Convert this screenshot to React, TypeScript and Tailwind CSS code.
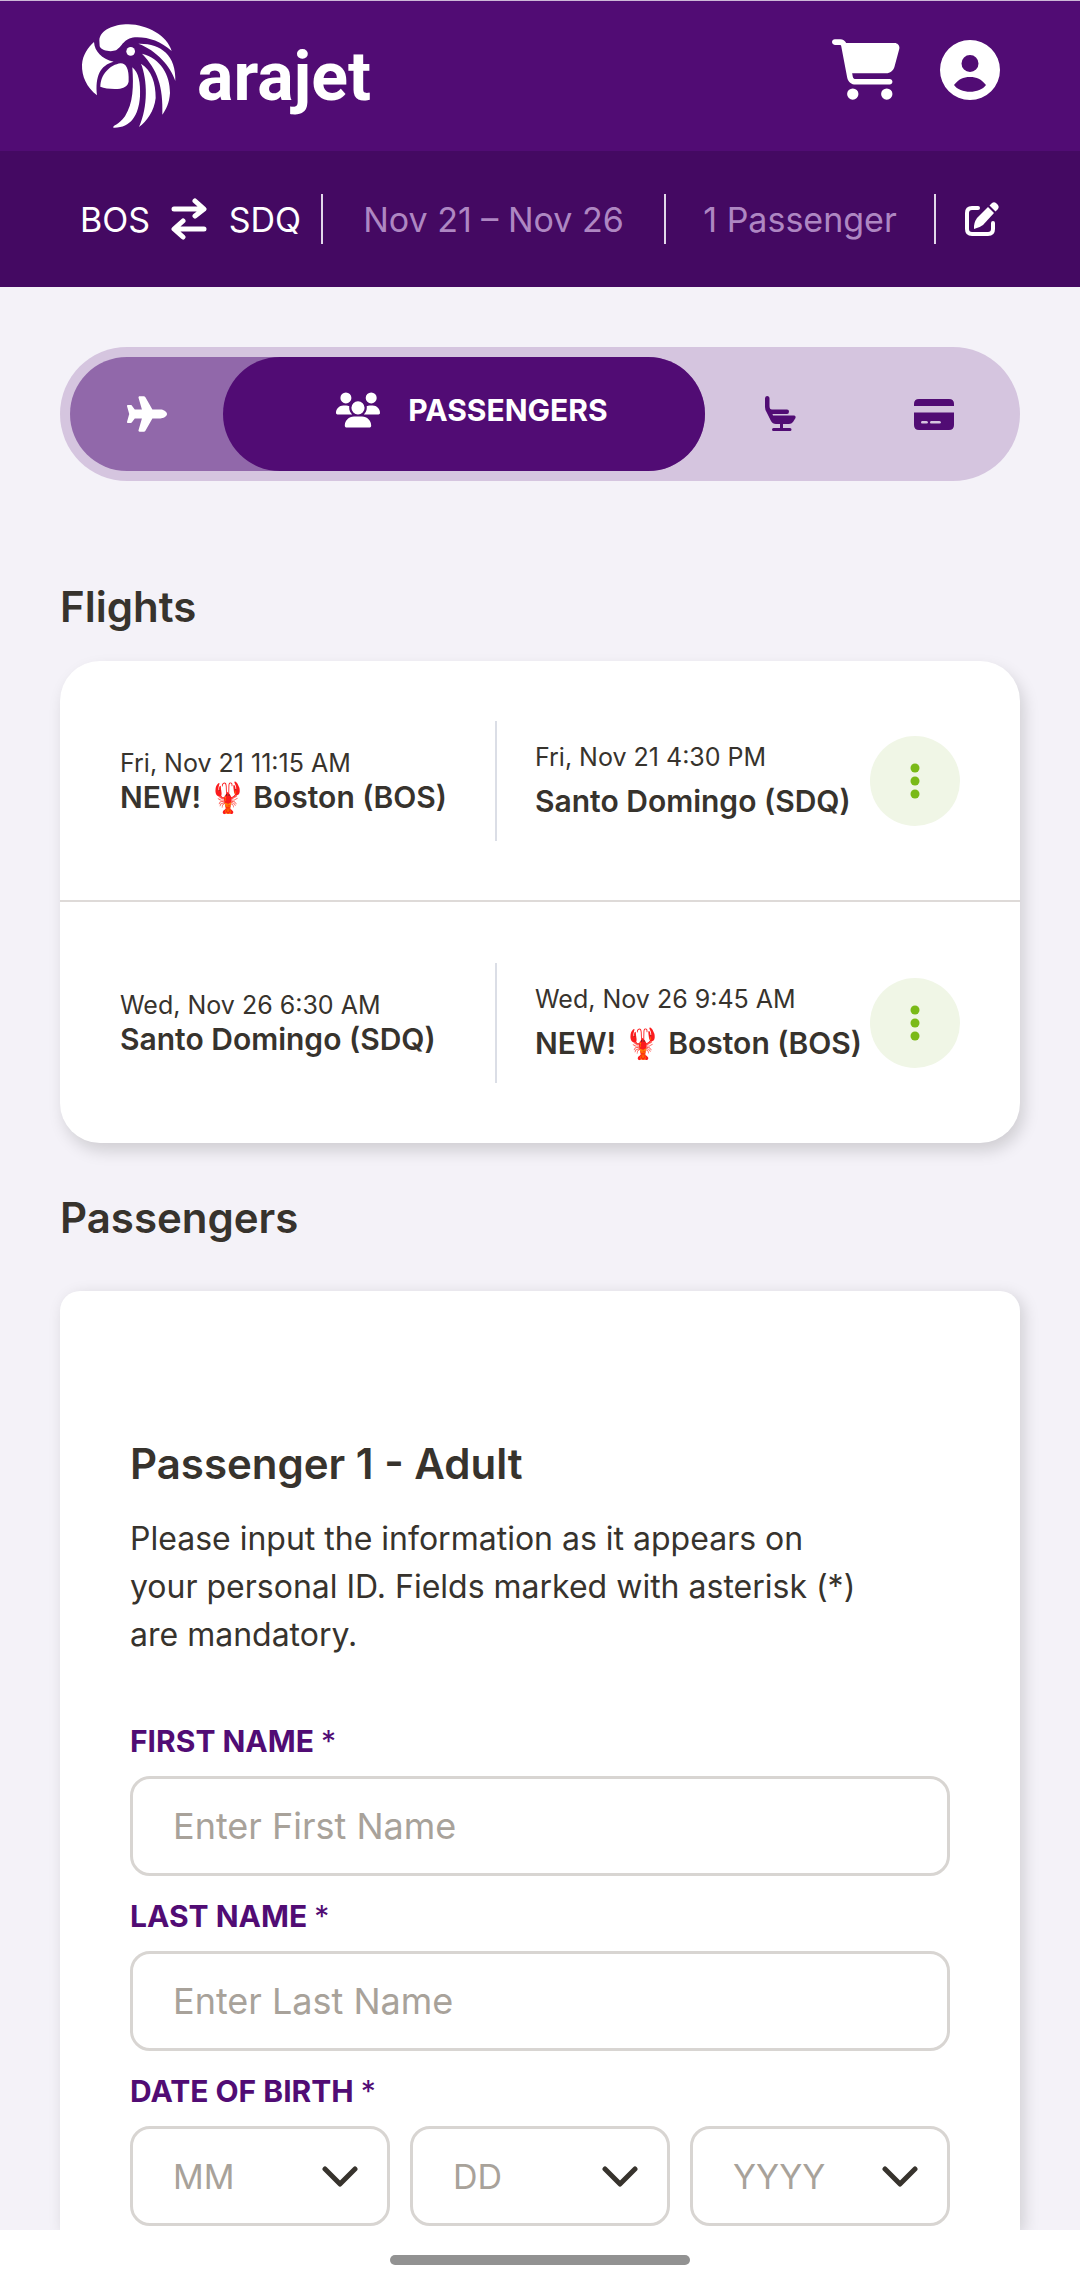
import { FaCartShopping, FaPlane, FaUsers } from "react-icons/fa6"

const flights = [
  {
    departure: { date: "Fri, Nov 21 11:15 AM", city: "NEW! 🦞 Boston (BOS)" },
    arrival: { date: "Fri, Nov 21 4:30 PM", city: "Santo Domingo (SDQ)" },
  },
  {
    departure: { date: "Wed, Nov 26 6:30 AM", city: "Santo Domingo (SDQ)" },
    arrival: { date: "Wed, Nov 26 9:45 AM", city: "NEW! 🦞 Boston (BOS)" },
  },
]

const nameFields = [
  { id: "first-name", label: "FIRST NAME", placeholder: "Enter First Name" },
  { id: "last-name", label: "LAST NAME", placeholder: "Enter Last Name" },
]

const dateParts = [
  { id: "birth-month", placeholder: "MM", name: "Month" },
  { id: "birth-day", placeholder: "DD", name: "Day" },
  { id: "birth-year", placeholder: "YYYY", name: "Year" },
]

function ParrotLogo() {
  return (
    <svg viewBox="60 70 291 321" className="h-[107px] w-[97px]" fill="currentColor" aria-hidden="true">
      <path d="M118 122C120 92 160 74 205 74C262 75 322 108 335 154C302 124 262 111 225 113C190 116 188 140 168 152C155 157 125 155 119 140Z" />
      <path d="M102 127C104 155 125 178 161 186C120 197 105 230 111 287C80 262 65 230 66 195C68 165 85 142 102 127Z" />
      <path d="M182 191C198 192 207 205 206 245C204 258 195 265 180 267C160 269 135 267 121 261C121 225 150 195 182 191Z" />
      <circle cx="212" cy="155" r="13" />
      <path d="M235 132C300 130 349 165 346 244C332 200 290 152 235 132Z" />
      <path d="M246 162C302 176 330 225 330 280C328 310 318 330 307 345C310 260 292 210 246 162Z" />
      <path d="M243 192C275 211 287 250 287 295C283 335 260 365 237 382C265 320 262 240 243 192Z" />
      <path d="M217 203C236 218 242 250 240 290C236 350 210 386 160 384C158 376 175 378 195 350C220 310 221 260 217 203Z" />
    </svg>
  )
}

function AccountIcon() {
  return (
    <svg viewBox="0 0 60 60" className="size-[60px]" aria-hidden="true">
      <path
        fill="currentColor"
        fillRule="evenodd"
        d="M30 0a30 30 0 1 1 0 60a30 30 0 0 1 0-60ZM30 15a8.500 8.500 0 1 0 0 17a8.500 8.500 0 0 0 0-17ZM14 45C20 54 40 54 46 45C41 39 37 37 30 37C23 37 19 39 14 45Z"
      />
    </svg>
  )
}

function SwapIcon() {
  return (
    <svg viewBox="0 0 36 42" className="h-[42px] w-9" fill="none" stroke="currentColor" strokeWidth="5" strokeLinecap="round" strokeLinejoin="round" aria-hidden="true">
      <path d="M3 11H32M24 3L33 11L24 18M33 31H4M12 23L3 31L12 39" />
    </svg>
  )
}

function EditIcon() {
  return (
    <svg viewBox="0 0 36 36" className="size-9" aria-hidden="true">
      <path d="M14 7H8Q3 7 3 12V28Q3 33 8 33H24Q29 33 29 28V22" fill="none" stroke="currentColor" strokeWidth="4" strokeLinecap="round" />
      <path d="M24 6L30 12L19 24Q16 26.500 10 28Q9.500 22 13 17Z" fill="currentColor" />
      <path d="M25.500 4.500L28 2Q30 .5 32 2L34 4Q35.500 6 34 8L31.500 10.500Z" fill="currentColor" />
    </svg>
  )
}

function SeatIcon() {
  return (
    <svg viewBox="0 0 32 36" className="h-9 w-8" fill="currentColor" aria-hidden="true">
      <path d="M0 2.500Q0 0 2 0Q4.500 0 4.500 2.500V10Q4.500 13.500 7 13.500H22Q24 13.500 24 15.500Q24 18 22 18H7.500L8 19.500H29Q31 19.500 30.500 22L28 26Q26.500 28 24 28H18V32H25Q26.500 32 26.500 33.500Q26.500 35 25 35H8.500Q7 35 7 33.500Q7 32 8.500 32H15V28H11Q7.500 28 6 25L1.500 16Q0 13.500 0 11Z" />
    </svg>
  )
}

function PaymentIcon() {
  return (
    <svg viewBox="0 0 40 31" className="h-[31px] w-10" fill="currentColor" aria-hidden="true">
      <path d="M0 7V5Q0 0 5 0H35Q40 0 40 5V7Z" />
      <path fillRule="evenodd" d="M0 13.500H40V26Q40 31 35 31H5Q0 31 0 26ZM8 22Q7 22 7 23.500Q7 24.500 8 24.500H12.500Q14 24.500 14 23.500Q14 22 12.500 22ZM17 22Q16 22 16 23.500Q16 24.500 17 24.500H25.500Q27 24.500 27 23.500Q27 22 25.500 22Z" />
    </svg>
  )
}

function Header() {
  return (
    <header>
      <div className="flex h-[151px] items-start justify-between border-t border-[#cdb9d8] bg-[#510c74] px-20 text-white">
        <a href="/" className="mt-[22px] flex items-center gap-5">
          <ParrotLogo />
          <span className="font-['Roboto',sans-serif] text-[68px] leading-[84px] font-bold">arajet</span>
        </a>
        <div className="mt-[38px] flex items-center gap-10">
          <button aria-label="Cart">
            <FaCartShopping className="h-[61px] w-[68px]" />
          </button>
          <button aria-label="Account">
            <AccountIcon />
          </button>
        </div>
      </div>

      {/* Trip summary */}
      <div className="flex h-[136px] items-center bg-[#440962] px-20 text-[34px] text-white">
        <div className="flex flex-1 items-center justify-between pr-5">
          <span>BOS</span>
          <SwapIcon />
          <span>SDQ</span>
        </div>
        <div className="flex h-[50px] w-[343px] items-center justify-center border-l-2 border-[#e2d8ea] text-[#ae87c2]">Nov 21 – Nov 26</div>
        <div className="flex h-[50px] w-[270px] items-center justify-center border-l-2 border-[#e2d8ea] text-[#ae87c2]">1 Passenger</div>
        <div className="flex h-[50px] items-center border-l-2 border-[#e2d8ea] pl-7">
          <button aria-label="Edit search">
            <EditIcon />
          </button>
        </div>
      </div>
    </header>
  )
}

function Stepper() {
  return (
    <nav className="flex h-[134px] rounded-full bg-[#d5c5df] p-2.5 text-[#510c74]">
      <div className="flex flex-1 rounded-full bg-[#9168aa] text-white">
        <a href="#flights" aria-label="Flights" className="flex w-[153px] items-center justify-center">
          <FaPlane className="h-9 w-10" />
        </a>
        <a href="#passengers" className="flex flex-1 items-center justify-center gap-7 rounded-full bg-[#510c74] pb-2 pl-4 text-[30px] font-bold">
          <FaUsers className="h-9 w-11" />
          PASSENGERS
        </a>
      </div>
      <a href="#seats" aria-label="Seats" className="flex w-[152px] items-center justify-center">
        <SeatIcon />
      </a>
      <a href="#payment" aria-label="Payment" className="flex w-[153px] items-center justify-center">
        <PaymentIcon />
      </a>
    </nav>
  )
}

function FlightRow({ flight }: { flight: (typeof flights)[number] }) {
  return (
    <div className="flex h-[241px] items-center px-[60px]">
      <div className="w-[375px]">
        <div className="text-[25px] leading-8">{flight.departure.date}</div>
        <div className="text-[30px] leading-9 font-semibold whitespace-nowrap">{flight.departure.city}</div>
      </div>
      <div className="flex h-[120px] flex-1 flex-col justify-center gap-2 border-l-2 border-[#dbdee6] pl-[38px]">
        <div className="text-[25px] leading-8">{flight.arrival.date}</div>
        <div className="text-[30px] leading-10 font-semibold whitespace-nowrap">{flight.arrival.city}</div>
      </div>
      <button aria-label="Flight details" className="flex size-[90px] shrink-0 items-center justify-center rounded-full bg-[#f0f6e6] text-[#7aba18]">
        <svg viewBox="0 0 10 36" className="h-9 w-2.5" fill="currentColor" aria-hidden="true">
          <circle cx="5" cy="5" r="4.500" />
          <circle cx="5" cy="18" r="4.500" />
          <circle cx="5" cy="31" r="4.500" />
        </svg>
      </button>
    </div>
  )
}

function PassengerForm() {
  return (
    <form className="flex-1 rounded-t-[20px] bg-white px-[70px] pt-[148px] shadow-[4px_4px_16px_rgba(0,0,0,0.15)]">
      <h3 className="text-[42px] leading-[50px] font-semibold">Passenger 1 - Adult</h3>
      <p className="mt-[26px] pr-[90px] text-[32px] leading-12">
        Please input the information as it appears on your personal ID. Fields marked with asterisk (*) are mandatory.
      </p>

      <div className="mt-[62px]">
        {nameFields.map((field) => (
          <div key={field.id} className="mb-5">
            <label htmlFor={field.id} className="block h-[55px] text-[30px] leading-10 font-bold text-[#510c74]">
              {field.label} <span className="font-normal">*</span>
            </label>
            <input
              id={field.id}
              type="text"
              placeholder={field.placeholder}
              className="block h-[100px] w-full rounded-[20px] border-3 border-[#d8d5d2] px-10 text-[36px] placeholder-[#a8a29a]"
            />
          </div>
        ))}
        <fieldset>
          <legend className="block h-[55px] text-[30px] leading-10 font-bold text-[#510c74]">
            DATE OF BIRTH <span className="font-normal">*</span>
          </legend>
          <div className="grid grid-cols-3 gap-5">
            {dateParts.map((part) => (
              <div key={part.id} className="relative">
                <select
                  id={part.id}
                  aria-label={part.name}
                  className="block h-[100px] w-full appearance-none rounded-[20px] border-3 border-[#d8d5d2] bg-white px-10 text-[34px] text-[#a8a29a]"
                >
                  <option>{part.placeholder}</option>
                </select>
                <svg viewBox="0 0 36 22" className="pointer-events-none absolute top-10 right-8 h-[22px] w-9 text-[#37332d]" fill="none" stroke="currentColor" strokeWidth="5" strokeLinecap="round" strokeLinejoin="round" aria-hidden="true">
                  <path d="M3 3L18 18L33 3" />
                </svg>
              </div>
            ))}
          </div>
        </fieldset>
      </div>
    </form>
  )
}

export default function App() {
  return (
    <div className="flex min-h-screen flex-col bg-[#f4f2f8] font-['Inter',sans-serif] text-[#37332d]">
      <Header />
      <main className="flex flex-1 flex-col overflow-hidden px-[60px] pt-[60px]">
        <Stepper />

        <h2 className="mt-[101px] text-[42px] leading-[50px] font-semibold">Flights</h2>
        <section className="mt-[29px] rounded-[40px] bg-white shadow-[4px_8px_16px_rgba(0,0,0,0.15)]">
          <div className="divide-y-2 divide-[#dedad8]">
            {flights.map((flight) => (
              <FlightRow key={flight.departure.date} flight={flight} />
            ))}
          </div>
        </section>

        <h2 className="mt-[50px] mb-12 text-[42px] leading-[50px] font-semibold">Passengers</h2>
        <PassengerForm />
      </main>
      <footer className="flex h-12 items-center justify-center bg-white pt-3">
        <div className="h-2.5 w-[300px] rounded-full bg-[#929292]" />
      </footer>
    </div>
  )
}
